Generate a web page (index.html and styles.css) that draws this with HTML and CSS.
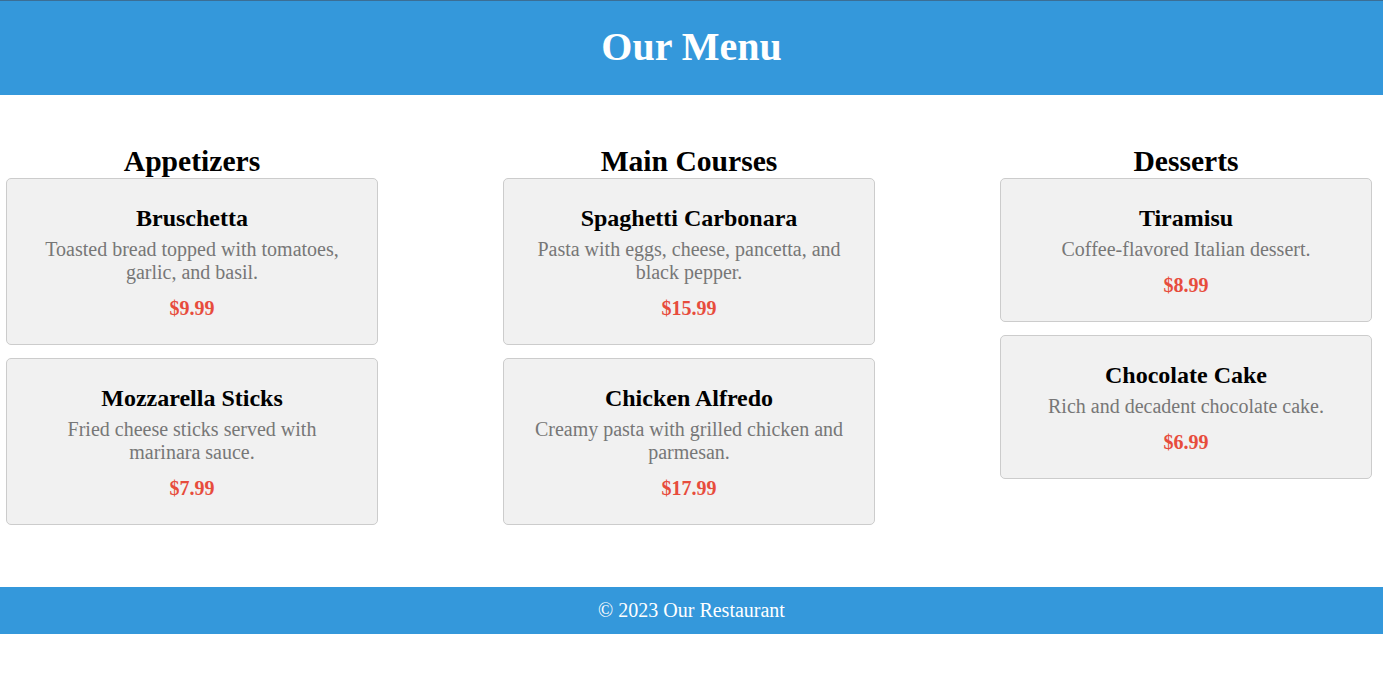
FILE: index.html
```html
<!DOCTYPE html>
<html lang="en">
<head>
<meta charset="utf-8">
<title>Our Menu</title>
<link rel="stylesheet" href="styles.css">
</head>
<body>
<header class="site-header">
  <h1 class="site-title">Our Menu</h1>
</header>
<main class="menu">
  <section class="category">
    <h2 class="category-title">Appetizers</h2>
    <div class="card">
      <h3 class="item-name">Bruschetta</h3>
      <p class="item-desc">Toasted bread topped with tomatoes, garlic, and basil.</p>
      <p class="item-price">$9.99</p>
    </div>
    <div class="card">
      <h3 class="item-name">Mozzarella Sticks</h3>
      <p class="item-desc">Fried cheese sticks served with marinara sauce.</p>
      <p class="item-price">$7.99</p>
    </div>
  </section>
  <section class="category">
    <h2 class="category-title">Main Courses</h2>
    <div class="card">
      <h3 class="item-name">Spaghetti Carbonara</h3>
      <p class="item-desc">Pasta with eggs, cheese, pancetta, and black pepper.</p>
      <p class="item-price">$15.99</p>
    </div>
    <div class="card">
      <h3 class="item-name">Chicken Alfredo</h3>
      <p class="item-desc">Creamy pasta with grilled chicken and parmesan.</p>
      <p class="item-price">$17.99</p>
    </div>
  </section>
  <section class="category">
    <h2 class="category-title">Desserts</h2>
    <div class="card">
      <h3 class="item-name">Tiramisu</h3>
      <p class="item-desc">Coffee-flavored Italian dessert.</p>
      <p class="item-price">$8.99</p>
    </div>
    <div class="card">
      <h3 class="item-name">Chocolate Cake</h3>
      <p class="item-desc">Rich and decadent chocolate cake.</p>
      <p class="item-price">$6.99</p>
    </div>
  </section>
</main>
<footer class="site-footer">
  <p class="footer-text">&copy; 2023 Our Restaurant</p>
</footer>
</body>
</html>
```

FILE: styles.css
```css
html, body {
  margin: 0;
  padding: 0;
  background: #ffffff;
  font-family: "Liberation Serif", "Times New Roman", serif;
  color: #000;
}

.site-header {
  box-sizing: border-box;
  background: #3498db;
  border-top: 1px solid #3b6e95;
  height: 95px;
  padding-bottom: 2px;
  display: flex;
  align-items: center;
  justify-content: center;
}

.site-title {
  margin: 0;
  color: #ffffff;
  font-size: 40px;
  font-weight: bold;
  line-height: 46px;
}

.menu {
  display: grid;
  grid-template-columns: repeat(3, 372px);
  justify-content: space-between;
  align-items: start;
  padding: 49px 11px 49px 6px;
}

.category-title {
  margin: 0;
  text-align: center;
  font-size: 29.6px;
  font-weight: bold;
  line-height: 34px;
}

.card {
  background: #f1f1f1;
  border: 1px solid #cccccc;
  border-radius: 5px;
  padding: 26px 25px 24px;
  margin-bottom: 13px;
  text-align: center;
}

.item-name {
  margin: 0 0 6px;
  font-size: 24px;
  font-weight: bold;
  line-height: 27px;
}

.item-desc {
  margin: 0;
  font-size: 20px;
  line-height: 23px;
  color: #777777;
}

.item-price {
  margin: 13px 0 0;
  font-size: 20px;
  line-height: 23px;
  font-weight: bold;
  color: #e74c3c;
}

.site-footer {
  background: #3498db;
  padding: 12px 0;
  text-align: center;
}

.footer-text {
  margin: 0;
  color: #ffffff;
  font-size: 20px;
  line-height: 23px;
}
```
